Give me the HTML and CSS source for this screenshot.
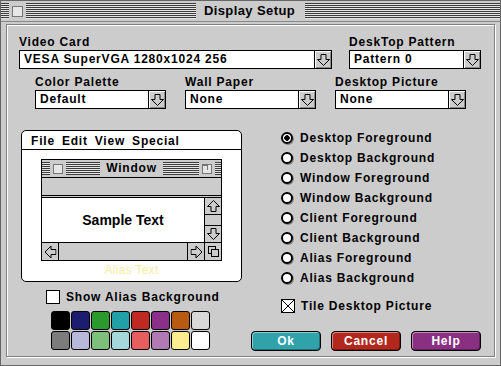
FILE: index.html
```html
<!DOCTYPE html>
<html lang="en">
<head>
    <meta charset="UTF-8">
    <title>Display Setup</title>
    <link rel="stylesheet" href="styles.css">
</head>
<body>
    <div class="window">
        <div class="titlebar">
            <div class="tb-side">
                <span class="stripes edge"></span>
                <span class="close-box"></span>
                <span class="stripes"></span>
            </div>
            <span class="tb-title">Display Setup</span>
            <div class="tb-side">
                <span class="stripes"></span>
            </div>
        </div>

        <div class="frame">
            <div class="row-top">
                <div class="field">
                    <div class="label">Video Card</div>
                    <div class="select">
                        <span class="sel-text">VESA SuperVGA 1280x1024 256</span>
                        <span class="sel-btn"><svg width="13" height="12" viewBox="0 0 13 12"><path d="M4 .5h5v5h3.5l-6 6-6-6H4z" fill="none" stroke="#000"/></svg></span>
                    </div>
                </div>
                <div class="field">
                    <div class="label">DeskTop Pattern</div>
                    <div class="select">
                        <span class="sel-text">Pattern 0</span>
                        <span class="sel-btn"><svg width="13" height="12" viewBox="0 0 13 12"><path d="M4 .5h5v5h3.5l-6 6-6-6H4z" fill="none" stroke="#000"/></svg></span>
                    </div>
                </div>
            </div>

            <div class="row-second">
                <div class="field">
                    <div class="label">Color Palette</div>
                    <div class="select">
                        <span class="sel-text">Default</span>
                        <span class="sel-btn"><svg width="13" height="12" viewBox="0 0 13 12"><path d="M4 .5h5v5h3.5l-6 6-6-6H4z" fill="none" stroke="#000"/></svg></span>
                    </div>
                </div>
                <div class="field">
                    <div class="label">Wall Paper</div>
                    <div class="select">
                        <span class="sel-text">None</span>
                        <span class="sel-btn"><svg width="13" height="12" viewBox="0 0 13 12"><path d="M4 .5h5v5h3.5l-6 6-6-6H4z" fill="none" stroke="#000"/></svg></span>
                    </div>
                </div>
                <div class="field">
                    <div class="label">Desktop Picture</div>
                    <div class="select">
                        <span class="sel-text">None</span>
                        <span class="sel-btn"><svg width="13" height="12" viewBox="0 0 13 12"><path d="M4 .5h5v5h3.5l-6 6-6-6H4z" fill="none" stroke="#000"/></svg></span>
                    </div>
                </div>
            </div>

            <div class="main">
                <div class="left-col">
                    <div class="preview">
                        <div class="menubar">
                            <span>File</span><span>Edit</span><span>View</span><span>Special</span>
                        </div>
                        <div class="mini-win">
                            <div class="mini-title">
                                <div class="tb-side">
                                    <span class="stripes edge"></span>
                                    <span class="close-box small"></span>
                                    <span class="stripes"></span>
                                </div>
                                <span class="mini-name">Window</span>
                                <div class="tb-side">
                                    <span class="stripes"></span>
                                    <span class="zoom-box"></span>
                                    <span class="stripes edge-r"></span>
                                </div>
                            </div>
                            <div class="mini-bar"></div>
                            <div class="mini-body">
                                <div class="mini-content">Sample Text</div>
                                <div class="vscroll">
                                    <span class="arrow-box up"><svg width="13" height="12" viewBox="0 0 13 12"><path d="M4 .5h5v5h3.5l-6 6-6-6H4z" fill="none" stroke="#000"/></svg></span>
                                    <span class="track"></span>
                                    <span class="arrow-box down"><svg width="13" height="12" viewBox="0 0 13 12"><path d="M4 .5h5v5h3.5l-6 6-6-6H4z" fill="none" stroke="#000"/></svg></span>
                                </div>
                            </div>
                            <div class="hscroll">
                                <span class="arrow-box left"><svg width="13" height="12" viewBox="0 0 13 12"><path d="M4 .5h5v5h3.5l-6 6-6-6H4z" fill="none" stroke="#000"/></svg></span>
                                <span class="track"></span>
                                <span class="arrow-box right"><svg width="13" height="12" viewBox="0 0 13 12"><path d="M4 .5h5v5h3.5l-6 6-6-6H4z" fill="none" stroke="#000"/></svg></span>
                                <span class="arrow-box size"><svg width="13" height="13" viewBox="0 0 13 13"><rect x="1.5" y="1.5" width="7" height="7" fill="none" stroke="#000"/><rect x="4.5" y="4.5" width="7" height="7" fill="#ccc" stroke="#000"/></svg></span>
                            </div>
                        </div>
                        <div class="alias-text">Alias Text</div>
                    </div>

                    <div class="check-row alias">
                        <span class="checkbox"></span>
                        <span>Show Alias Background</span>
                    </div>

                    <div class="swatches">
                        <span class="swatch" style="background:#000000"></span>
                        <span class="swatch" style="background:#1c1c70"></span>
                        <span class="swatch" style="background:#2a9a2c"></span>
                        <span class="swatch" style="background:#21a0a8"></span>
                        <span class="swatch" style="background:#be2a22"></span>
                        <span class="swatch" style="background:#8a3088"></span>
                        <span class="swatch" style="background:#b85a12"></span>
                        <span class="swatch" style="background:#d8d8d8"></span>
                        <span class="swatch" style="background:#7c7c7c"></span>
                        <span class="swatch" style="background:#b8b8da"></span>
                        <span class="swatch" style="background:#7cc07c"></span>
                        <span class="swatch" style="background:#a4d8da"></span>
                        <span class="swatch" style="background:#e65e5e"></span>
                        <span class="swatch" style="background:#b27ab2"></span>
                        <span class="swatch" style="background:#fcee90"></span>
                        <span class="swatch" style="background:#ffffff"></span>
                    </div>
                </div>

                <div class="right-col">
                    <div class="radio-list">
                        <div class="radio-row"><span class="radio on"></span>Desktop Foreground</div>
                        <div class="radio-row"><span class="radio"></span>Desktop Background</div>
                        <div class="radio-row"><span class="radio"></span>Window Foreground</div>
                        <div class="radio-row"><span class="radio"></span>Window Background</div>
                        <div class="radio-row"><span class="radio"></span>Client Foreground</div>
                        <div class="radio-row"><span class="radio"></span>Client Background</div>
                        <div class="radio-row"><span class="radio"></span>Alias Foreground</div>
                        <div class="radio-row"><span class="radio"></span>Alias Background</div>
                    </div>

                    <div class="check-row tile">
                        <span class="checkbox"><svg width="12" height="12" viewBox="0 0 12 12"><path d="M0 0L12 12M12 0L0 12" stroke="#000"/></svg></span>
                        <span>Tile Desktop Picture</span>
                    </div>

                    <div class="buttons">
                        <button class="btn ok">Ok</button>
                        <button class="btn cancel">Cancel</button>
                        <button class="btn help">Help</button>
                    </div>
                </div>
            </div>
        </div>
    </div>
</body>
</html>
```

FILE: styles.css
```css
body {
    margin: 0;
    font-family: "Liberation Sans", Arial, sans-serif;
    font-size: 12px;
    font-weight: bold;
    letter-spacing: 0.8px;
    color: #000;
}
.window {
    width: 501px;
    height: 366px;
    box-sizing: border-box;
    background: #cccccc;
    border: 1px solid #666;
    overflow: hidden;
}

/* title bars */
.titlebar {
    height: 20px;
    border-bottom: 1px solid #888;
    display: grid;
    grid-template-columns: 1fr auto 1fr;
    align-items: center;
}
.tb-side {
    display: flex;
    align-items: center;
}
.stripes {
    flex: 1;
    height: 16px;
    background: repeating-linear-gradient(to bottom, #3c3c3c 0 1px, #e4e4e4 1px 2px);
}
.stripes.edge {
    flex: 0 0 8px;
}
.stripes.edge-r {
    flex: 0 0 6px;
}
.close-box {
    width: 11px;
    height: 11px;
    box-sizing: border-box;
    margin: 0 3px;
    border: 1px solid #777;
    background: #e6e6e6;
}
.tb-title {
    padding: 0 10px 0 8px;
    font-size: 13px;
    letter-spacing: 0.4px;
    line-height: 20px;
}

.frame {
    margin: 2px 5px 0;
    height: 333px;
    box-sizing: border-box;
    border: 1px solid #808080;
    box-shadow: inset 1px 1px 0 #fff, 1px 1px 0 #fff;
    padding: 10px 0 0 12px;
}

/* dropdowns */
.label {
    line-height: 14px;
    margin-bottom: 1px;
    white-space: nowrap;
}
.select {
    height: 19px;
    box-sizing: border-box;
    border: 1px solid #000;
    background: #fff;
    display: flex;
}
.sel-text {
    flex: 1;
    padding-left: 4px;
    line-height: 17px;
    white-space: nowrap;
    overflow: hidden;
}
.sel-btn {
    width: 17px;
    box-sizing: border-box;
    border-left: 1px solid #000;
    background: #ccc;
    box-shadow: inset 1px 1px 0 #fff, inset -1px -1px 0 #888;
    display: flex;
    align-items: center;
    justify-content: center;
}
.row-top {
    display: grid;
    grid-template-columns: 313px 132px;
    column-gap: 17px;
}
.row-second {
    margin-top: 6px;
    padding-left: 16px;
    display: grid;
    grid-template-columns: repeat(3, 131px);
    column-gap: 19px;
}

.main {
    margin-top: 19px;
    padding-left: 2px;
    display: grid;
    grid-template-columns: 221px 230px;
    column-gap: 9px;
}

/* preview */
.preview {
    margin-top: 2px;
    height: 152px;
    box-sizing: border-box;
    border: 1px solid #000;
    border-radius: 5px;
    background: #fff;
}
.menubar {
    height: 19px;
    box-sizing: border-box;
    border-bottom: 1px solid #000;
    padding: 3px 9px 0;
    line-height: 14px;
    display: flex;
    gap: 7px;
}
.mini-win {
    margin: 9px 0 0 19px;
    width: 181px;
    box-sizing: border-box;
    border: 1px solid #000;
    background: #ccc;
}
.mini-title {
    height: 17px;
    border-bottom: 1px solid #000;
    display: grid;
    grid-template-columns: 1fr auto 1fr;
    align-items: center;
}
.mini-title .stripes {
    height: 13px;
}
.close-box.small {
    width: 10px;
    height: 10px;
}
.zoom-box {
    width: 10px;
    height: 10px;
    box-sizing: border-box;
    margin: 0 3px;
    border: 1px solid #777;
    background: linear-gradient(#777, #777) 0 0 / 5px 1px no-repeat,
                linear-gradient(#777, #777) 4px 0 / 1px 5px no-repeat,
                #e6e6e6;
}
.mini-name {
    padding: 0 6px;
    line-height: 17px;
}
.mini-bar {
    height: 17px;
    border-bottom: 3px double #000;
}
.mini-body {
    height: 44px;
    display: flex;
}
.mini-content {
    flex: 1;
    background: #fff;
    font-size: 14px;
    letter-spacing: 0;
    line-height: 16px;
    display: flex;
    align-items: center;
    justify-content: center;
}
.vscroll {
    width: 17px;
    box-sizing: border-box;
    border-left: 1px solid #000;
    display: flex;
    flex-direction: column;
}
.hscroll {
    height: 18px;
    box-sizing: border-box;
    border-top: 1px solid #000;
    display: flex;
}
.track {
    flex: 1;
}
.arrow-box {
    flex: 0 0 17px;
    box-sizing: border-box;
    display: flex;
    align-items: center;
    justify-content: center;
    background: #ccc;
}
.arrow-box.up {
    border-bottom: 1px solid #000;
}
.arrow-box.up svg {
    transform: rotate(180deg);
}
.arrow-box.down {
    border-top: 1px solid #000;
}
.arrow-box.left {
    border-right: 1px solid #000;
}
.arrow-box.left svg {
    transform: rotate(90deg);
}
.arrow-box.right,
.arrow-box.size {
    border-left: 1px solid #000;
}
.arrow-box.right svg {
    transform: rotate(-90deg);
}
.alias-text {
    margin-top: 2px;
    text-align: center;
    font-weight: normal;
    letter-spacing: 0.3px;
    line-height: 14px;
    color: #f6eea6;
}

/* checkboxes */
.check-row {
    display: flex;
    align-items: center;
    gap: 6px;
    height: 14px;
    line-height: 14px;
}
.check-row.alias {
    margin-top: 8px;
    padding-left: 25px;
}
.check-row.tile {
    margin-top: 11px;
    padding-left: 30px;
}
.checkbox {
    width: 14px;
    height: 14px;
    box-sizing: border-box;
    border: 1px solid #000;
    background: #fff;
    display: flex;
}

.swatches {
    margin: 7px 0 0 30px;
    display: grid;
    grid-template-columns: repeat(8, 19px);
    grid-auto-rows: 19px;
    gap: 1px;
}
.swatch {
    box-sizing: border-box;
    border: 1px solid #000;
    border-radius: 3px;
}

/* radios */
.radio-list {
    padding-left: 30px;
}
.radio-row {
    height: 20px;
    display: flex;
    align-items: center;
    gap: 7px;
    white-space: nowrap;
}
.radio {
    width: 12px;
    height: 12px;
    box-sizing: border-box;
    border: 2px solid #000;
    border-radius: 50%;
    background: #fff;
    box-shadow: 1px 1px 0 #888;
}
.radio.on {
    background: radial-gradient(circle, #000 0 2.5px, #fff 3px);
}

/* buttons */
.buttons {
    margin-top: 18px;
    display: flex;
    gap: 10px;
}
.btn {
    width: 70px;
    height: 20px;
    padding: 0;
    border: 1px solid #000;
    border-radius: 4px;
    font-family: inherit;
    font-size: 12px;
    font-weight: bold;
    letter-spacing: 0.8px;
    color: #fff;
    box-shadow: inset 1px 1px 0 rgba(255, 255, 255, 0.45), inset -1px -1px 0 rgba(0, 0, 0, 0.3);
}
.btn.ok {
    background: #2fa2aa;
}
.btn.cancel {
    background: #b2281c;
}
.btn.help {
    background: #8a3082;
}
```
